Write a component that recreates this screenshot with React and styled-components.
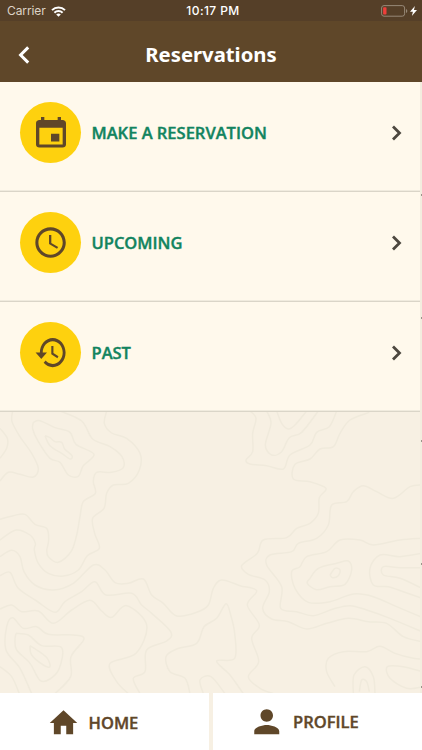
import React from "react";
import styled, { createGlobalStyle } from "styled-components";

const Global = createGlobalStyle`
  * { box-sizing: border-box; }
  body { margin: 0; background: #f7f0e3; }
`;

const Screen = styled.div`
  display: flex;
  flex-direction: column;
  width: 422px;
  height: 750px;
  overflow: hidden;
  background: #f7f0e3;
  font-family: "Open Sans", "Noto Sans", sans-serif;
`;

const StatusBar = styled.div`
  display: grid;
  grid-template-columns: 1fr auto 1fr;
  align-items: center;
  height: 21px;
  padding: 1px 5px 0 7px;
  background: #553f28;
  color: #f6f0e8;
  font-family: Inter, Roboto, sans-serif;
  font-size: 12px;
  line-height: 20px;
`;

const StatusGroup = styled.div`
  display: flex;
  align-items: center;
  gap: ${(p) => p.$gap};
  justify-content: ${(p) => (p.$end ? "flex-end" : "flex-start")};
`;

const Carrier = styled.span`
  letter-spacing: -0.1px;
  color: #ddd3c7;
`;

const Clock = styled.span`
  padding-left: 2px;
  font-weight: 500;
  letter-spacing: 0.4px;
  color: #fff;
`;

const Icon = styled.svg`
  display: block;
  flex: none;
  width: ${(p) => p.$w}px;
  height: ${(p) => p.$h || p.$w}px;
`;

const Header = styled.header`
  display: grid;
  grid-template-columns: 60px 1fr 60px;
  align-items: center;
  height: 61px;
  padding-top: 6px;
  background: #5f4729;
  color: #fff;
`;

const BackButton = styled.button`
  display: flex;
  padding: 0 0 0 18px;
  border: 0;
  background: none;
  color: inherit;
`;

const Title = styled.h1`
  margin: 0;
  padding-bottom: 2px;
  text-align: center;
  font-family: "Noto Sans", sans-serif;
  font-size: 20.3px;
  line-height: 28px;
  font-weight: 700;
`;

const Body = styled.main`
  display: grid;
  grid-template-columns: 420px 2px;
  height: 611px;
`;

const Content = styled.div`
  display: flex;
  flex-direction: column;
`;

const Edge = styled.div`
  background: repeating-linear-gradient(
      #9b958b 0 2px, transparent 2px 123px
    ) 1px 112px / 1px 500px no-repeat,
    #f3eddf;
`;

const Row = styled.button`
  display: flex;
  align-items: center;
  flex: none;
  height: 110px;
  padding: 0 17px 8px 20px;
  border: 0;
  border-bottom: 1px solid #dad5c8;
  box-shadow: inset 0 -1px 0 #f0ebde;
  background: #fff9ec;
  color: #12845f;
  font: inherit;
  text-align: left;
`;

const Badge = styled.span`
  display: flex;
  align-items: center;
  justify-content: center;
  width: 61px;
  height: 61px;
  border-radius: 50%;
  background: #fed10e;
  color: #5f4729;
`;

const RowLabel = styled.span`
  flex: 1;
  padding-left: 10.5px;
  font-size: 16.5px;
  line-height: 24px;
  font-weight: 600;
  -webkit-text-stroke: 0.4px currentColor;
`;

const Chevron = styled(Icon)`
  color: #4d483f;
`;

const MapArea = styled.svg`
  display: block;
  width: 422px;
  height: 281px;
`;

const TabBar = styled.nav`
  display: grid;
  grid-template-columns: 209px 209px;
  gap: 4px;
  height: 57px;
  background: #f7f0e3;
`;

const Tab = styled.button`
  display: flex;
  align-items: center;
  gap: ${(p) => p.$gap};
  padding: ${(p) => p.$pad};
  border: 0;
  background: #fff;
  color: #5f4729;
  font: inherit;
  font-size: 16.5px;
  line-height: 24px;
  font-weight: 600;
  -webkit-text-stroke: 0.4px currentColor;
`;

// Contour lines, as points that a smooth curve passes through.
const contours = [
  [[38,18],[36,50],[60,95],[95,145],[115,190],[100,216],[60,208],[25,202],[0,228]],
  [[0,70],[22,100],[20,130],[0,160]],
  [[100,52],[120,47],[165,68],[210,82],[228,118],[282,148],[250,182],[235,214],[205,210],[180,172],[150,160],[115,110],[98,72],[100,52]],
  [[135,92],[150,98],[165,110],[185,112],[194,132],[216,152],[210,162],[185,145],[150,122],[135,92]],
  [[180,18],[245,48],[278,102],[330,125],[366,155],[370,188],[335,202],[290,202],[280,230],[286,265],[250,290],[240,335],[230,390],[213,440],[175,472],[145,455],[140,435]],
  [[320,18],[313,55],[335,84],[380,100],[420,145],[418,195],[385,235],[340,240],[320,265],[312,310],[278,340],[284,385],[298,430],[262,452],[235,495],[190,513],[145,505],[115,475],[103,435],[106,415],[90,390],[48,375],[0,405]],
  [[0,343],[40,332],[75,328],[105,358],[140,370],[146,405],[140,435]],
  [[0,455],[35,436],[60,455],[72,500],[105,540],[160,555],[220,535],[280,480],[315,495],[345,533],[385,535],[430,522],[455,570],[490,595],[530,633],[590,622],[625,600],[640,550],[665,525],[720,542],[770,557],[742,600],[778,660],[755,700],[776,770],[745,815],[780,850],[820,866]],
  [[0,512],[30,502],[55,550],[110,588],[165,622],[195,590],[245,560],[285,530],[318,570],[395,565],[425,600],[455,625],[512,680],[500,708],[440,735],[435,800],[400,820],[420,866]],
  [[0,612],[35,600],[65,620],[115,618],[160,655],[215,615],[270,586],[305,618],[335,637],[380,602],[440,660],[408,745],[330,775],[350,830],[385,866]],
  [[95,866],[60,790],[18,735],[20,665],[38,638],[70,670],[110,665],[145,688],[220,690],[252,702],[213,755],[212,815],[165,866]],
  [[48,685],[85,690],[125,722],[185,728],[178,790],[150,822],[120,826],[90,775],[50,735],[45,705],[48,685]],
  [[90,722],[118,740],[142,760],[150,785],[130,780],[95,750],[90,722]],
  [[0,785],[35,815],[58,866]],
  [[570,866],[555,820],[510,800],[498,755],[530,732],[590,715],[612,665],[650,640],[678,596],[692,630],[704,685],[704,760],[650,768],[690,810],[730,866]],
  [[610,866],[600,825],[633,815],[675,866]],
  [[750,18],[768,40],[758,85],[758,140],[738,165],[750,177],[800,182],[850,192],[870,150],[930,120],[950,82],[988,65],[1010,18]],
  [[800,18],[813,55],[796,120],[815,150],[845,140],[868,98],[905,82],[955,18]],
  [[830,18],[845,55],[865,72],[885,60],[920,18]],
  [[1108,22],[1050,45],[1020,85],[1000,125],[960,132],[930,162],[885,178],[880,222],[930,230],[978,250],[958,278],[955,325],[930,355],[890,370],[860,398],[790,405],[772,445],[725,482],[745,508],[795,525],[808,560],[788,610],[815,642],[865,650],[920,672],[980,655],[1045,640],[1105,650],[1160,655],[1210,695],[1266,710]],
  [[1266,240],[1230,245],[1180,280],[1130,260],[1090,242],[1060,260],[1040,290],[995,300],[985,360],[950,400],[895,415],[875,440],[810,450],[800,480],[845,545],[842,610],[890,620],[940,632],[1000,612],[1050,602],[1100,615],[1170,640],[1266,680]],
  [[1266,400],[1200,405],[1120,420],[1080,405],[1020,405],[980,440],[920,455],[900,485],[875,500],[885,550],[925,592],[990,590],[1060,567],[1120,575],[1190,605],[1266,637]],
  [[930,520],[955,490],[1010,475],[1045,468],[1055,495],[1035,538],[990,545],[950,554],[922,535],[930,520]],
  [[990,510],[1005,490],[1020,495],[1015,512],[998,518],[990,510]],
  [[1266,445],[1200,455],[1140,450],[1110,490],[1120,540],[1165,545],[1210,560],[1266,580]],
  [[1266,488],[1200,488],[1150,485],[1150,510],[1200,520],[1266,550]],
  [[1005,845],[980,800],[985,760],[1030,740],[1100,740],[1140,724],[1185,745],[1240,760],[1266,762]],
  [[1060,866],[1062,810],[1095,785],[1120,815],[1125,866]],
  [[1078,860],[1085,825],[1100,830],[1108,860]],
  [[1266,800],[1210,785],[1162,785],[1170,820],[1220,850],[1266,846]],
];

const smooth = (pts) => {
  let d = `M${pts[0][0]} ${pts[0][1]}`;
  for (let i = 0; i < pts.length - 1; i++) {
    const a = pts[i - 1] || pts[i];
    const b = pts[i];
    const c = pts[i + 1];
    const e = pts[i + 2] || c;
    d += `C${b[0] + (c[0] - a[0]) / 6} ${b[1] + (c[1] - a[1]) / 6} ${c[0] - (e[0] - b[0]) / 6} ${c[1] - (e[1] - b[1]) / 6} ${c[0]} ${c[1]}`;
  }
  return d;
};

const glyphs = {
  calendar: "M17 12h-5v5h5v-5zM16 1v2H8V1H6v2H5c-1.11 0-1.99.9-1.99 2L3 19c0 1.1.89 2 2 2h14c1.1 0 2-.9 2-2V5c0-1.1-.9-2-2-2h-1V1h-2zm3 18H5V8h14v11z",
  clock: "M11.99 2C6.47 2 2 6.48 2 12s4.47 10 9.99 10C17.52 22 22 17.52 22 12S17.52 2 11.99 2zM12 20c-4.42 0-8-3.58-8-8s3.58-8 8-8 8 3.58 8 8-3.58 8-8 8zm.5-13H11v6l5.25 3.15.75-1.23-4.5-2.67z",
  history: "M13 3c-4.97 0-9 4.03-9 9H1l3.89 3.89.07.14L9 12H6c0-3.87 3.13-7 7-7s7 3.13 7 7-3.13 7-7 7c-1.93 0-3.68-.79-4.94-2.06l-1.42 1.42C8.27 19.99 10.51 21 13 21c4.97 0 9-4.03 9-9s-4.03-9-9-9zm-1 5v5l4.28 2.54.72-1.21-3.5-2.08V8H12z",
  home: "M10 20v-6h4v6h5v-8h3L12 3 2 12h3v8z",
  person: "M12 12c2.21 0 4-1.79 4-4s-1.79-4-4-4-4 1.79-4 4 1.79 4 4 4zm0 2c-2.67 0-8 1.34-8 4v2h16v-2c0-2.66-5.33-4-8-4z",
};

const items = [
  { label: "MAKE A RESERVATION", icon: "calendar", w: 40, h: 36.5, box: "0 -1 24 24" },
  { label: "UPCOMING", icon: "clock", w: 36.5, h: 36.5, box: "-0.2 -0.2 24 24" },
  { label: "PAST", icon: "history", w: 34.3, h: 39, box: "-0.8 0 24 24" },
];

export default function App() {
  return (
    <Screen>
      <Global />
      <StatusBar>
        <StatusGroup $gap="5px">
          <Carrier>Carrier</Carrier>
          <Icon $w={15} $h={11} viewBox="0 0 15 11" fill="none" stroke="#fff" strokeWidth="2">
            <path d="M1 4.1a9.3 9.3 0 0 1 13 0M3.4 6.7a5.9 5.9 0 0 1 8.2 0" />
            <path d="M7.5 10.8 5.2 8.5a3.3 3.3 0 0 1 4.6 0z" fill="#fff" stroke="none" />
          </Icon>
        </StatusGroup>
        <Clock>10:17 PM</Clock>
        <StatusGroup $gap="2px" $end>
          <Icon $w={27} $h={12} viewBox="0 0 27 12" fill="none">
            <rect x="0.6" y="0.6" width="23" height="10.6" rx="2.4" stroke="#978878" />
            <rect x="2.1" y="2.2" width="3.4" height="7.4" rx="0.8" fill="#ee3f3a" />
            <path d="M25 4.1v3.8q1.3-.5 1.3-1.9T25 4.1z" fill="#978878" />
          </Icon>
          <Icon $w={7} $h={10} viewBox="0 0 6 10" preserveAspectRatio="none" fill="#fff">
            <path d="M4.2 0 0 5.7h2.5L1.6 10 6 4.1H3.4z" />
          </Icon>
        </StatusGroup>
      </StatusBar>
      <Header>
        <BackButton aria-label="Back">
          <Icon $w={12} $h={18} viewBox="0 0 12 18" fill="none" stroke="#fff" strokeWidth="3">
            <path d="M10.2 1.4 2.6 9l7.6 7.6" />
          </Icon>
        </BackButton>
        <Title>Reservations</Title>
      </Header>
      <Body>
        <Content>
          {items.map((it) => (
            <Row key={it.label}>
              <Badge>
                <Icon $w={it.w} $h={it.h} viewBox={it.box} preserveAspectRatio="none" fill="currentColor">
                  <path d={glyphs[it.icon]} />
                </Icon>
              </Badge>
              <RowLabel>{it.label}</RowLabel>
              <Chevron $w={12} $h={16} viewBox="0 0 12 16" fill="none" stroke="currentColor" strokeWidth="2.8">
                <path d="M2 1.5 8.5 8 2 14.5" />
              </Chevron>
            </Row>
          ))}
          <MapArea viewBox="0 21 1266 843" preserveAspectRatio="none" fill="none" stroke="#f0eadc" strokeWidth="4.5">
            {contours.map((pts, i) => (
              <path key={i} d={smooth(pts)} />
            ))}
          </MapArea>
        </Content>
        <Edge />
      </Body>
      <TabBar>
        <Tab $gap="8.5px" $pad="3px 0 0 47px">
          <Icon $w={33} $h={34} viewBox="0 0 24 24" preserveAspectRatio="none" fill="currentColor">
            <path d={glyphs.home} />
          </Icon>
          HOME
        </Tab>
        <Tab $gap="7.5px" $pad="0 0 0 35px">
          <Icon $w={37.5} viewBox="0 0 24 24" fill="currentColor">
            <path d={glyphs.person} />
          </Icon>
          PROFILE
        </Tab>
      </TabBar>
    </Screen>
  );
}
